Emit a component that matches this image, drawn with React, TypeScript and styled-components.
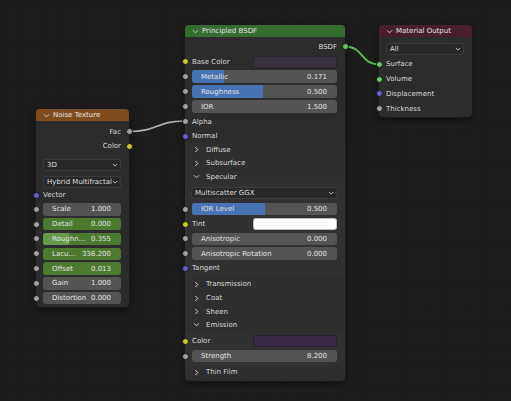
import styled, { createGlobalStyle } from "styled-components";

const GlobalStyle = createGlobalStyle`
  html, body {
    margin: 0;
    padding: 0;
    background: #1d1d1d;
  }
  * {
    box-sizing: border-box;
  }
`;

const Canvas = styled.div`
  position: relative;
  width: 511px;
  height: 401px;
  overflow: hidden;
  background-color: #1d1d1d;
  background-image: radial-gradient(circle, #232323 0.6px, transparent 1px);
  background-size: 13.3px 13.3px;
  background-position: 5px 4px;
  font-family: "DejaVu Sans", "Liberation Sans", sans-serif;
  font-size: 7px;
  color: #d9d9d9;
`;

const Links = styled.svg`
  position: absolute;
  inset: 0;
  width: 100%;
  height: 100%;
  pointer-events: none;
`;

const Node = styled.div<{ $left: number; $top: number; $width: number }>`
  position: absolute;
  left: ${(p) => p.$left}px;
  top: ${(p) => p.$top}px;
  width: ${(p) => p.$width}px;
  background: #2c2c2c;
  border-radius: 4px;
  box-shadow: 0 0 0 1px #191919, 0 3px 8px rgba(0, 0, 0, 0.55);
`;

const Header = styled.div<{ $color: string }>`
  height: 12px;
  display: flex;
  align-items: center;
  gap: 3px;
  padding-left: 7px;
  background: ${(p) => p.$color};
  border-radius: 4px 4px 0 0;
  color: #e4e4e4;
  white-space: nowrap;
`;

const Body = styled.div<{ $pt: number; $pb: number }>`
  display: flex;
  flex-direction: column;
  padding-top: ${(p) => p.$pt}px;
  padding-bottom: ${(p) => p.$pb}px;
`;

const Row = styled.div<{ $h: number; $out?: boolean }>`
  position: relative;
  height: ${(p) => p.$h}px;
  display: flex;
  align-items: center;
  justify-content: ${(p) => (p.$out ? "flex-end" : "flex-start")};
  padding: 0 8px 0 7px;
  white-space: nowrap;
`;

const Socket = styled.span<{ $color: string; $right?: boolean }>`
  position: absolute;
  top: 50%;
  ${(p) => (p.$right ? "right: -3.5px;" : "left: -3.5px;")}
  width: 7px;
  height: 7px;
  margin-top: -3.5px;
  border-radius: 50%;
  background: ${(p) => p.$color};
  border: 1px solid #171717;
`;

const Label = styled.span`
  flex: 1;
  color: #d9d9d9;
`;

const OutLabel = styled.span`
  color: #d9d9d9;
`;

const Swatch = styled.span<{ $color: string }>`
  width: 84px;
  height: 12px;
  border-radius: 3px;
  background: ${(p) => p.$color};
  box-shadow: inset 0 0 0 1px rgba(0, 0, 0, 0.25);
`;

const Field = styled.div<{ $tone?: "gray" | "green" }>`
  position: relative;
  flex: 1;
  height: 12.5px;
  display: flex;
  align-items: center;
  justify-content: space-between;
  padding: 0 10px 0 9px;
  border-radius: 3px;
  overflow: hidden;
  background: ${(p) => (p.$tone === "green" ? "#4b7a30" : "#545454")};
  color: #e2e2e2;
`;

const Fill = styled.span<{ $color: string }>`
  position: absolute;
  left: 0;
  top: 0;
  bottom: 0;
  background: ${(p) => p.$color};
`;

const FieldText = styled.span`
  position: relative;
`;

const Dropdown = styled.div`
  flex: 1;
  height: 12px;
  display: flex;
  align-items: center;
  justify-content: space-between;
  padding: 0 3px 0 4px;
  border-radius: 3px;
  background: #282828;
  box-shadow: inset 0 0 0 1px #3b3b3b;
  color: #dedede;
`;

const PanelHeader = styled.div<{ $h: number }>`
  height: ${(p) => p.$h}px;
  display: flex;
  align-items: center;
  gap: 6px;
  padding-left: 8px;
  background: #2f2f2f;
  color: #d9d9d9;
`;

const PanelContent = styled.div<{ $pt: number; $pb: number }>`
  display: flex;
  flex-direction: column;
  padding-top: ${(p) => p.$pt}px;
  padding-bottom: ${(p) => p.$pb}px;
  background: #313131;
`;

const Chevron = ({ open, size = 7 }: { open: boolean; size?: number }) => (
  <svg width={size} height={size} viewBox="0 0 7 7" style={{ flex: "none" }}>
    <polyline
      points={open ? "1,2.3 3.5,4.8 6,2.3" : "2.3,1 4.8,3.5 2.3,6"}
      fill="none"
      stroke="#d0d0d0"
      strokeWidth="1"
    />
  </svg>
);

const YELLOW = "#c7c729";
const GRAY = "#a1a1a1";
const PURPLE = "#6363c7";
const GREEN = "#63c763";
const BLUE = "#4772b3";

type SliderProps = {
  label: string;
  value: string;
  fill?: number;
  tone?: "gray" | "green";
  fillColor?: string;
};

const Slider = ({ label, value, fill, tone, fillColor = BLUE }: SliderProps) => (
  <Field $tone={tone}>
    {fill !== undefined && <Fill $color={fillColor} style={{ width: `${fill * 100}%` }} />}
    <FieldText>{label}</FieldText>
    <FieldText>{value}</FieldText>
  </Field>
);

const NoiseTexture = () => {
  const inputs: SliderProps[] = [
    { label: "Scale", value: "1.000" },
    { label: "Detail", value: "0.000", tone: "green" },
    { label: "Roughn...", value: "0.355", tone: "green", fill: 0.33, fillColor: "#66994c" },
    { label: "Lacu...", value: "336.200", tone: "green" },
    { label: "Offset", value: "0.013", tone: "green" },
    { label: "Gain", value: "1.000" },
    { label: "Distortion", value: "0.000" },
  ];
  return (
    <Node $left={36} $top={109} $width={93}>
      <Header $color="#7f4c20">
        <Chevron open size={7} />
        Noise Texture
      </Header>
      <Body $pt={3} $pb={1.5}>
        <Row $h={15} $out>
          <OutLabel>Fac</OutLabel>
          <Socket $color={GRAY} $right />
        </Row>
        <Row $h={14} $out>
          <OutLabel>Color</OutLabel>
          <Socket $color={YELLOW} $right />
        </Row>
        <Row $h={17.5} style={{ alignItems: "flex-end" }}>
          <Dropdown>
            <span>3D</span>
            <Chevron open size={6} />
          </Dropdown>
        </Row>
        <Row $h={17.5} style={{ alignItems: "flex-end" }}>
          <Dropdown>
            <span>Hybrid Multifractal</span>
            <Chevron open size={6} />
          </Dropdown>
        </Row>
        <Row $h={14}>
          <Socket $color={PURPLE} />
          <Label>Vector</Label>
        </Row>
        {inputs.map((input) => (
          <Row $h={14.8} key={input.label}>
            <Socket $color={GRAY} />
            <Slider {...input} />
          </Row>
        ))}
      </Body>
    </Node>
  );
};

const PrincipledBSDF = () => (
  <Node $left={185} $top={25} $width={160}>
    <Header $color="#356d31">
      <Chevron open />
      Principled BSDF
    </Header>
    <Body $pt={2} $pb={2}>
      <Row $h={15} $out>
        <OutLabel>BSDF</OutLabel>
        <Socket $color={GREEN} $right />
      </Row>
      <Row $h={15}>
        <Socket $color={YELLOW} />
        <Label>Base Color</Label>
        <Swatch $color="#39313f" />
      </Row>
      <Row $h={15}>
        <Socket $color={GRAY} />
        <Slider label="Metallic" value="0.171" fill={0.22} />
      </Row>
      <Row $h={15}>
        <Socket $color={GRAY} />
        <Slider label="Roughness" value="0.500" fill={0.49} />
      </Row>
      <Row $h={15}>
        <Socket $color={GRAY} />
        <Slider label="IOR" value="1.500" />
      </Row>
      <Row $h={15}>
        <Socket $color={GRAY} />
        <Label>Alpha</Label>
      </Row>
      <Row $h={14}>
        <Socket $color={PURPLE} />
        <Label>Normal</Label>
      </Row>
      <PanelHeader $h={13.5}>
        <Chevron open={false} />
        Diffuse
      </PanelHeader>
      <PanelHeader $h={13.5}>
        <Chevron open={false} />
        Subsurface
      </PanelHeader>
      <PanelHeader $h={13}>
        <Chevron open />
        Specular
      </PanelHeader>
      <PanelContent $pt={3.5} $pb={2}>
        <Row $h={15} style={{ paddingLeft: 6, alignItems: "flex-start" }}>
          <Dropdown>
            <span>Multiscatter GGX</span>
            <Chevron open size={6} />
          </Dropdown>
        </Row>
        <Row $h={15}>
          <Socket $color={GRAY} />
          <Slider label="IOR Level" value="0.500" fill={0.5} />
        </Row>
        <Row $h={15}>
          <Socket $color={YELLOW} />
          <Label>Tint</Label>
          <Swatch $color="#ffffff" />
        </Row>
        <Row $h={14.5}>
          <Socket $color={GRAY} />
          <Slider label="Anisotropic" value="0.000" />
        </Row>
        <Row $h={15}>
          <Socket $color={GRAY} />
          <Slider label="Anisotropic Rotation" value="0.000" />
        </Row>
        <Row $h={14}>
          <Socket $color={PURPLE} />
          <Label>Tangent</Label>
        </Row>
      </PanelContent>
      <PanelHeader $h={14}>
        <Chevron open={false} />
        Transmission
      </PanelHeader>
      <PanelHeader $h={14}>
        <Chevron open={false} />
        Coat
      </PanelHeader>
      <PanelHeader $h={13}>
        <Chevron open={false} />
        Sheen
      </PanelHeader>
      <PanelHeader $h={13.5}>
        <Chevron open />
        Emission
      </PanelHeader>
      <PanelContent $pt={2} $pb={2}>
        <Row $h={15}>
          <Socket $color={YELLOW} />
          <Label>Color</Label>
          <Swatch $color="#3b2a44" />
        </Row>
        <Row $h={15}>
          <Socket $color={GRAY} />
          <Slider label="Strength" value="8.200" />
        </Row>
      </PanelContent>
      <PanelHeader $h={13.5}>
        <Chevron open={false} />
        Thin Film
      </PanelHeader>
    </Body>
  </Node>
);

const MaterialOutput = () => (
  <Node $left={379} $top={25} $width={93}>
    <Header $color="#4a1f2c">
      <Chevron open />
      Material Output
    </Header>
    <Body $pt={0} $pb={1}>
      <Row $h={20} style={{ alignItems: "flex-end", paddingBottom: 2 }}>
        <Dropdown>
          <span>All</span>
          <Chevron open size={6} />
        </Dropdown>
      </Row>
      <Row $h={14.8}>
        <Socket $color={GREEN} />
        <Label>Surface</Label>
      </Row>
      <Row $h={14.8}>
        <Socket $color={GREEN} />
        <Label>Volume</Label>
      </Row>
      <Row $h={14.8}>
        <Socket $color={PURPLE} />
        <Label>Displacement</Label>
      </Row>
      <Row $h={14.8}>
        <Socket $color={GRAY} />
        <Label>Thickness</Label>
      </Row>
    </Body>
  </Node>
);

export default function App() {
  return (
    <>
      <GlobalStyle />
      <Canvas>
        <Links viewBox="0 0 511 401">
          <path
            d="M129 131.5 C 158 131.5, 156 121, 185 121"
            fill="none"
            stroke="#b3b3b3"
            strokeWidth="1.7"
          />
          <path
            d="M345 46.5 C 364 46.5, 360 64.3, 379 64.3"
            fill="none"
            stroke="#5cbf5c"
            strokeWidth="1.8"
          />
        </Links>
        <NoiseTexture />
        <PrincipledBSDF />
        <MaterialOutput />
      </Canvas>
    </>
  );
}
